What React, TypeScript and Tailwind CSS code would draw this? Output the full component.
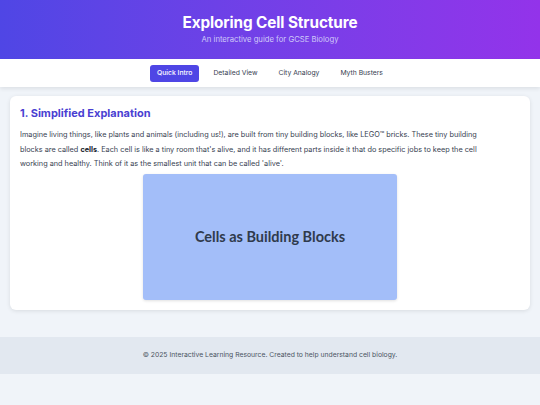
import React, { useState } from 'react';

const tabs = ['Quick Intro', 'Detailed View', 'City Analogy', 'Myth Busters'];

export default function App() {
  const [active, setActive] = useState('Quick Intro');

  return (
    <div className="min-h-[405px] bg-[#f0f4f9] font-['Inter',sans-serif] text-[#374151]">
      {/* Header */}
      <header className="h-[59px] bg-gradient-to-r from-[#4f46e5] to-[#9333ea] flex flex-col items-center justify-center text-white">
        <h1 className="text-[15.3px] font-bold leading-none tracking-[-0.1px]">Exploring Cell Structure</h1>
        <p className="text-[7.7px] text-[#cfcaf8] mt-[6px] leading-none">An interactive guide for GCSE Biology</p>
      </header>

      {/* Tabs */}
      <nav className="h-[28px] bg-white shadow-[0_2px_4px_rgba(0,0,0,0.08)] flex items-center justify-center gap-[7px] relative">
        {tabs.map((t) => (
          <button
            key={t}
            onClick={() => setActive(t)}
            className={
              active === t
                ? 'h-[17px] px-[7px] rounded-[3px] bg-[#4f46e5] text-white text-[6.8px] font-medium leading-none'
                : 'h-[17px] px-[7px] rounded-[3px] text-[#374151] text-[6.8px] font-normal leading-none'
            }
          >
            {t}
          </button>
        ))}
      </nav>

      {/* Content */}
      <main className="px-[10px] pt-[9px]">
        <section className="bg-white rounded-[6px] shadow-[0_1px_4px_rgba(0,0,0,0.1)] p-[10px]">
          <h2 className="text-[11px] font-bold text-[#4a3fd2] leading-none mt-[2px]">1. Simplified Explanation</h2>
          <p className="text-[7.3px] leading-[14.5px] mt-[9px] max-w-[480px] text-[#374151]">
            Imagine living things, like plants and animals (including us!), are built from tiny building blocks, like LEGO™ bricks. These tiny building
            blocks are called <strong className="font-bold text-[#111827]">cells</strong>. Each cell is like a tiny room that's alive, and it has different parts inside it that do specific jobs to keep the cell
            working and healthy. Think of it as the smallest unit that can be called 'alive'.
          </p>
          <div className="flex justify-center mt-[2px]">
            <div className="w-[254px] h-[126px] rounded-[3px] bg-[#a3bef9] shadow-[0_1px_3px_rgba(0,0,0,0.12)] flex items-center justify-center">
              <span className="font-['Lato',sans-serif] font-bold text-[14.5px] text-[#2f3a4c]">Cells as Building Blocks</span>
            </div>
          </div>
        </section>
      </main>

      {/* Footer */}
      <footer className="mt-[27px] h-[37px] bg-[#e2e8f0] flex items-center justify-center">
        <p className="text-[6.8px] text-[#4b5563]">© 2025 Interactive Learning Resource. Created to help understand cell biology.</p>
      </footer>
    </div>
  );
}
